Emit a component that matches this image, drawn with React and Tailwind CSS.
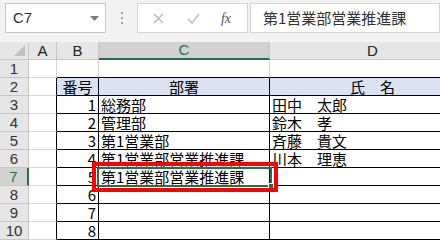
import React from 'react';

const rows = [
  { n: 1 },
  { n: 2, b: '番号', c: '部署', d: '氏　名', head: true },
  { n: 3, b: '1', c: '総務部', d: '田中　太郎' },
  { n: 4, b: '2', c: '管理部', d: '鈴木　孝' },
  { n: 5, b: '3', c: '第1営業部', d: '斉藤　貴文' },
  { n: 6, b: '4', c: '第1営業部営業推進課', d: '川本　理恵' },
  { n: 7, b: '5', c: '第1営業部営業推進課', d: '' },
  { n: 8, b: '6' },
  { n: 9, b: '7' },
  { n: 10, b: '8' },
];

function TopBar() {
  return (
    <div className="flex h-[42px] items-start bg-[#f3f3f3] pt-[3px] pl-[5px] font-['Liberation_Sans',sans-serif]">
      <div className="flex h-[30px] w-[101px] items-center justify-between border border-[#c6c6c6] bg-white pl-[7px] pr-[6px] text-[15px] text-[#333]">
        <span>C7</span>
        <svg width="9" height="5" viewBox="0 0 9 5"><path d="M0 0h9L4.5 5z" fill="#7a7a7a" /></svg>
      </div>
      <div className="flex h-[30px] w-[31px] flex-col items-center justify-center gap-[3px]">
        <span className="h-[2px] w-[2px] bg-[#a0a0a0]" />
        <span className="h-[2px] w-[2px] bg-[#a0a0a0]" />
        <span className="h-[2px] w-[2px] bg-[#a0a0a0]" />
      </div>
      <div className="flex h-[30px] w-[111px] items-center border border-[#d4d4d4] bg-white">
        <div className="flex w-[40px] justify-center">
          <svg width="11" height="11" viewBox="0 0 11 11"><path d="M1 1l9 9M10 1l-9 9" stroke="#b4b4b4" strokeWidth="1.3" /></svg>
        </div>
        <div className="flex w-[30px] justify-center">
          <svg width="13" height="11" viewBox="0 0 13 11"><path d="M1 6l4 4 7-9" stroke="#c4c4c4" strokeWidth="1.8" fill="none" /></svg>
        </div>
        <div className="flex w-[36px] justify-center font-['Liberation_Serif',serif] text-[14px] italic text-[#555]">fx</div>
      </div>
      <div className="ml-[2px] flex h-[30px] flex-1 items-center border border-[#d4d4d4] bg-white pl-[12px] font-['Noto_Sans_CJK_JP',sans-serif] text-[15px] text-[#333]">
        第1営業部営業推進課
      </div>
    </div>
  );
}

function ColHead({ label, sel }) {
  return (
    <div className={sel
      ? "flex h-[18px] items-center justify-center border-r border-b-2 border-r-[#c6c6c6] border-b-[#217346] bg-[#d2d2d2] font-['Liberation_Sans',sans-serif] text-[#217346]"
      : "flex h-[18px] items-center justify-center border-r border-b border-[#c6c6c6] bg-[#e6e6e6] font-['Liberation_Sans',sans-serif] text-[#222]"}>
      {label}
    </div>
  );
}

export default function App() {
  return (
    <div className="h-[240px] w-[440px] overflow-hidden bg-white">
      <TopBar />
      <div className="relative">
        <div className="grid grid-cols-[29px_28px_42px_171px_206px] font-['Noto_Sans_CJK_JP',sans-serif] text-[15px] leading-[18px]">
          <div className="relative h-[18px] border-r border-b border-[#c6c6c6] bg-[#e6e6e6]">
            <svg className="absolute right-[3px] bottom-[3px]" width="11" height="11" viewBox="0 0 11 11"><path d="M11 0v11H0z" fill="#bfbfbf" /></svg>
          </div>
          <ColHead label="A" />
          <ColHead label="B" />
          <ColHead label="C" sel />
          <ColHead label="D" />

          {rows.map((r) => (
            <React.Fragment key={r.n}>
              <div className={r.n === 7
                ? "flex h-[18px] items-center justify-center border-r-2 border-b border-r-[#217346] border-b-[#c6c6c6] bg-[#d2d2d2] font-['Liberation_Sans',sans-serif] text-[#217346]"
                : "flex h-[18px] items-center justify-center border-r border-b border-[#c6c6c6] bg-[#e6e6e6] font-['Liberation_Sans',sans-serif] text-[#333]"}>
                {r.n}
              </div>
              <div className={r.n === 1 ? 'h-[18px] border-r border-b border-[#d4d4d4]' : 'h-[18px] border-r border-r-black border-b border-b-[#d4d4d4]'} />
              {r.n === 1 ? (
                <>
                  <div className="h-[18px] border-r border-r-[#d4d4d4] border-b border-b-black" />
                  <div className="h-[18px] border-r border-r-[#d4d4d4] border-b border-b-black" />
                  <div className="h-[18px] border-r border-r-[#d4d4d4] border-b border-b-black" />
                </>
              ) : r.head ? (
                <>
                  <div className="h-[18px] border-r border-b border-black bg-[#d9e1f2] text-center text-black">{r.b}</div>
                  <div className="h-[18px] border-r border-b border-black bg-[#d9e1f2] text-center text-black">{r.c}</div>
                  <div className="h-[18px] border-r border-b border-black bg-[#d9e1f2] text-center text-black">{r.d}</div>
                </>
              ) : (
                <>
                  <div className="h-[18px] border-r border-b border-black pr-[2px] text-right text-black">{r.b}</div>
                  <div className="h-[18px] whitespace-nowrap border-r border-b border-black pl-[2px] text-black">{r.c}</div>
                  <div className="h-[18px] whitespace-nowrap border-r border-b border-black pl-[2px] text-black">{r.d}</div>
                </>
              )}
            </React.Fragment>
          ))}
        </div>
        <div className="absolute left-[97px] top-[125px] h-[20px] w-[175px] border-2 border-[#217346]" />
        <div className="absolute left-[268px] top-[141px] h-[6px] w-[6px] border border-white bg-[#217346]" />
        <div className="absolute left-[92px] top-[120px] h-[30px] w-[186px] border-4 border-[#ff0000]" />
      </div>
    </div>
  );
}
